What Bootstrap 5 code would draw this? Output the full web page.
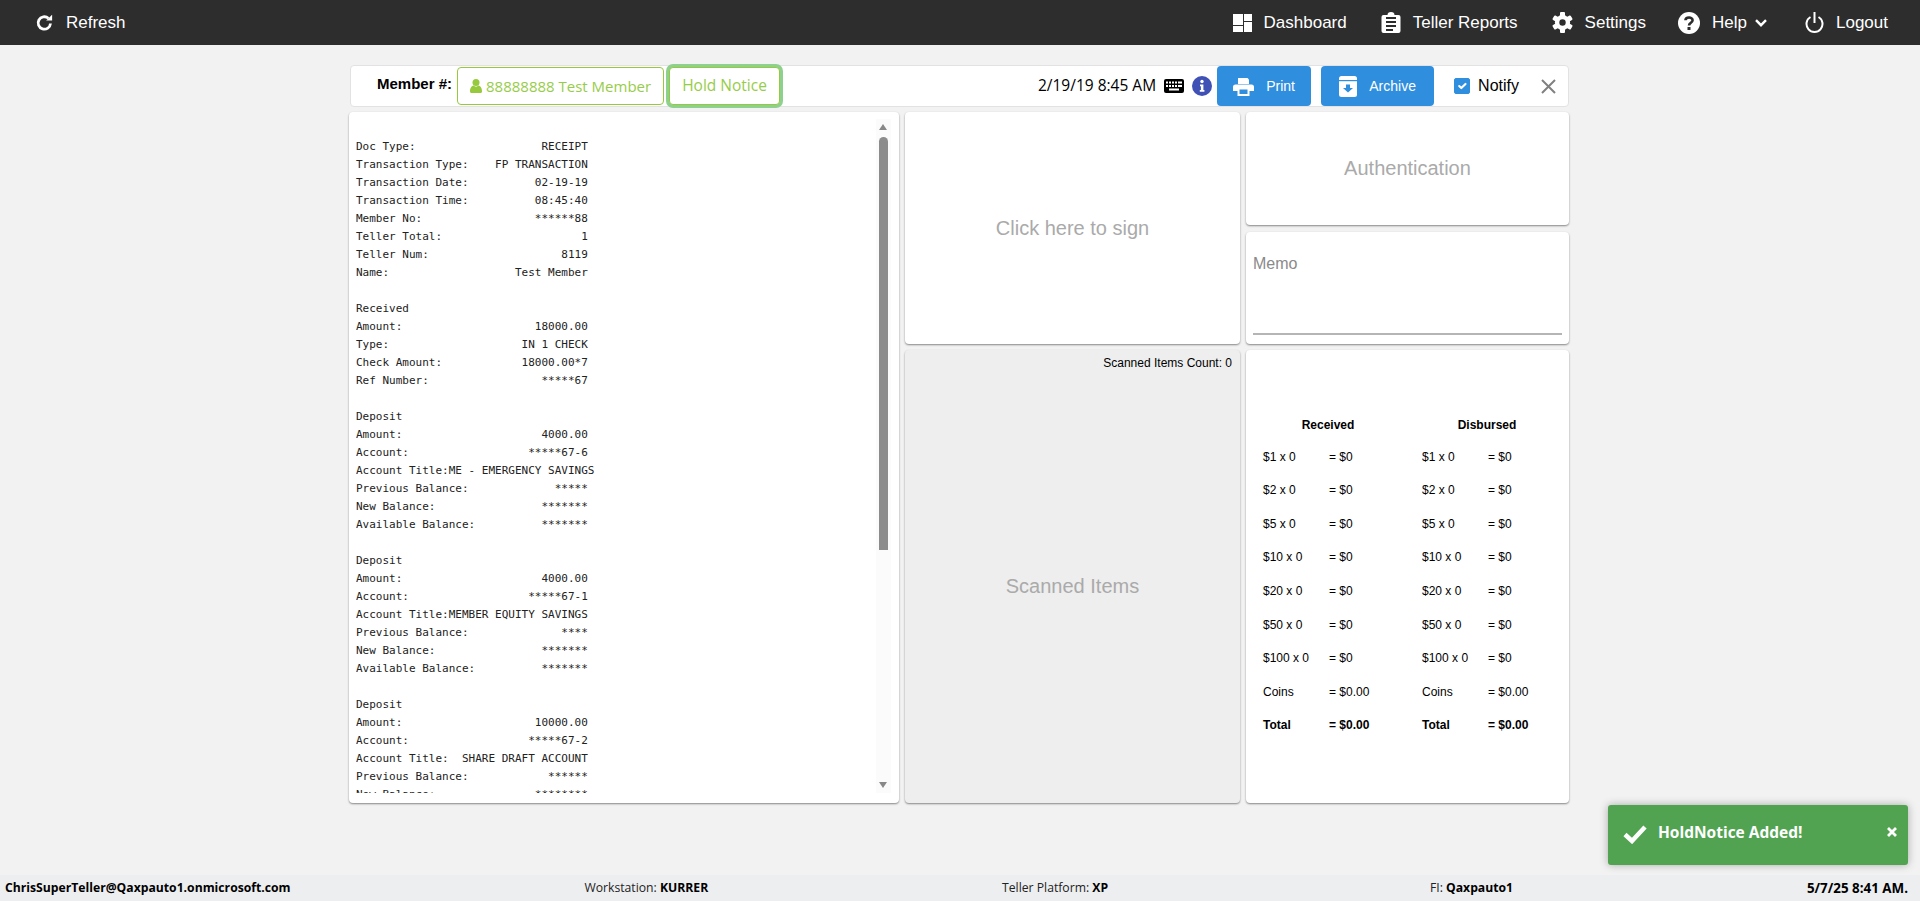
<!DOCTYPE html>
<html lang="en">
<head>
  <meta charset="UTF-8">
  <title>Teller</title>
  <link href="https://cdn.jsdelivr.net/npm/bootstrap@5.3.0/dist/css/bootstrap.min.css" rel="stylesheet">
  <style>
    body {
      background-color: #f2f2f2;
      font-family: "Liberation Sans", Arial, sans-serif;
      min-height: 901px;
      height: 901px;
      overflow: hidden;
      position: relative;
    }
    .top-bar {
      background-color: #2d2d2d;
      height: 45px;
      padding: 0 32px 0 35px;
      font-size: 17px;
    }
    .top-link {
      color: #fff;
      text-decoration: none;
      gap: 12px;
    }
    .link-reports { margin-left: 34px; }
    .link-settings { margin-left: 34px; }
    .link-help { margin-left: 32px; }
    .link-logout { margin-left: 38px; }
    .page-wrap {
      width: 1220px;
      margin: 20px 0 0 349px;
    }
    .tool-strip {
      height: 42px;
      margin-left: 1px;
      margin-bottom: 5px;
      background: #fff;
      border: 1px solid #e2e2e2;
      border-radius: 4px;
      padding-right: 12px;
      font-family: "Open Sans", sans-serif;
    }
    .member-label {
      font-family: "Liberation Sans", Arial, sans-serif;
      font-weight: 700;
      font-size: 15px;
      margin-left: 26px;
      margin-right: 5px;
      margin-top: -3px;
      color: #000;
    }
    .green-box {
      height: 38px;
      border: 1px solid #97c93d;
      border-radius: 4px;
      color: #97cc4a;
      font-size: 15px;
      background: #fff;
      gap: 4px;
    }
    .box-member { width: 207px; padding-left: 12px; }
    .box-hold {
      width: 111px;
      margin-left: 5px;
      justify-content: center;
      box-shadow: 0 0 0 3px #8ed18e;
      font-size: 15.5px;
    }
    .stamp-text {
      font-size: 15.5px;
      color: #000;
      margin-left: auto;
      margin-right: 8px;
    }
    .info-dot { margin: 0 5px 0 8px; }
    .blue-btn {
      background: #2f8edd;
      color: #fff;
      border: 0;
      border-radius: 4px;
      height: 40px;
      font-size: 14px;
      gap: 12px;
      font-family: "Liberation Sans", Arial, sans-serif;
    }
    .btn-print { width: 94px; }
    .btn-archive { width: 113px; margin-left: 10px; }
    .notify-check.form-check-input {
      width: 16px;
      height: 16px;
      margin: 0 8px 0 20px;
      background-color: #2f8edd;
      border-color: #2f8edd;
      border-radius: 2px;
    }
    .notify-text {
      font-size: 16px;
      color: #000;
      font-family: "Liberation Sans", Arial, sans-serif;
    }
    .close-x { margin-left: 22px; }
    .panel-grid {
      display: grid;
      grid-template-columns: 550px 335px 323px;
      grid-template-rows: 113px 113px 453px;
      gap: 6px;
      height: 691px;
    }
    .sheet {
      background: #fff;
      border-radius: 4px;
      box-shadow: 0 1px 2px rgba(0, 0, 0, .45);
    }
    .sheet-receipt {
      grid-row: 1 / 4;
      position: relative;
      overflow: hidden;
    }
    .receipt-text {
      font-family: "DejaVu Sans Mono", monospace;
      font-size: 11px;
      line-height: 18px;
      color: #222;
      margin: 0;
      padding: 26px 0 0 7px;
      height: 681px;
      overflow: hidden;
    }
    .scroll-track {
      position: absolute;
      top: 7px;
      left: 527px;
      width: 15px;
      height: 674px;
      background: #fbfbfb;
    }
    .scroll-up, .scroll-down {
      position: absolute;
      left: 3px;
      width: 0;
      height: 0;
      border-left: 4.5px solid transparent;
      border-right: 4.5px solid transparent;
    }
    .scroll-up { top: 5px; border-bottom: 6px solid #888; }
    .scroll-down { bottom: 5px; border-top: 6px solid #888; }
    .scroll-thumb {
      position: absolute;
      left: 3px;
      top: 18px;
      width: 9px;
      height: 413px;
      background: #8c8c8c;
      border-radius: 5px 5px 0 0;
    }
    .sheet-sign { grid-row: 1 / 3; }
    .ghost-text { color: #aaa; font-size: 20px; }
    .sheet-auth { padding-bottom: 2px; }
    .sheet-memo {
      margin-top: 1px;
      padding: 23px 7px 9px;
      color: #8a8a8a;
      font-size: 16px;
      line-height: 18px;
    }
    .memo-line { border-bottom: 2px solid #b5b5b5; }
    .sheet-scan {
      background: #eeeeee;
      font-size: 12px;
    }
    .scan-count { padding: 4px 8px 0 0; color: #000; }
    .scan-body { padding-bottom: 4px; }
    .cash-table {
      width: 100%;
      font-size: 12px;
      color: #000;
      table-layout: fixed;
    }
    .cash-table th { height: 29px; text-align: center; }
    .cash-table .head-in { padding: 0 29px 0 0; }
    .cash-table .head-out { padding: 0 17px 0 0; }
    .cash-table td { height: 33.6px; padding: 0; }
    .cash-table .col-a { width: 66px; }
    .cash-table .col-b { width: 93px; }
    .cash-wrap { padding-left: 17px; }
    .toast-msg {
      position: absolute;
      left: 1608px;
      top: 805px;
      width: 300px;
      height: 60px;
      background: #51a351;
      color: #fff;
      border-radius: 3px;
      box-shadow: 0 0 8px rgba(0, 0, 0, .3);
      padding-left: 15px;
      font-family: "Open Sans", sans-serif;
      font-weight: 700;
      font-size: 15.5px;
    }
    .toast-msg .toast-check { margin-top: -3px; }
    .toast-msg .toast-label { margin: -5px 0 0 11px; }
    .toast-msg .toast-x { margin: -6px 11px 0 auto; }
    .foot-bar {
      position: absolute;
      left: 0;
      right: 0;
      bottom: 0;
      height: 26px;
      background: #edeef0;
      padding: 0 12px 0 5px;
      font-family: "Open Sans", sans-serif;
      font-size: 12.2px;
      color: #222;
    }
    .foot-bar b { color: #000; }
    .foot-gap { margin-right: 28px; }
    .foot-date { font-size: 13.4px; }
  </style>
</head>
<body>
  <nav class="top-bar d-flex align-items-center">
    <a href="#" class="top-link d-flex align-items-center">
      <svg width="19" height="18" viewBox="0 0 18 18"><path d="M15 9.5A6.2 6.2 0 1 1 12.9 4.3" fill="none" stroke="#fff" stroke-width="2.8"/><path d="M10.6 6.6H16.6V.8z" fill="#fff"/></svg>
      Refresh
    </a>
    <a href="#" class="top-link d-flex align-items-center ms-auto">
      <svg width="19" height="18" viewBox="0 0 19 18" fill="#fff"><rect width="10" height="11"/><rect y="12" width="10" height="6"/><rect x="11" width="8" height="7"/><rect x="11" y="8" width="8" height="10"/></svg>
      Dashboard
    </a>
    <a href="#" class="top-link link-reports d-flex align-items-center">
      <svg width="20" height="21" viewBox="0 0 20 21"><path d="M2.5 3H6.5A3.5 3 0 0 1 13.5 3H17.5A2 2 0 0 1 19.5 5V19A2 2 0 0 1 17.5 21H2.5A2 2 0 0 1 .5 19V5A2 2 0 0 1 2.5 3z" fill="#fff"/><g fill="#2d2d2d"><rect x="5" y="5" width="10" height="2"/><rect x="5" y="9" width="10" height="2"/><rect x="5" y="13" width="10" height="2"/><rect x="5" y="17" width="7" height="2"/></g></svg>
      Teller Reports
    </a>
    <a href="#" class="top-link link-settings d-flex align-items-center">
      <svg width="21" height="21" viewBox="0 0 21 21"><g fill="#fff"><rect x="8" y="0" width="5" height="21" rx="1"/><rect x="8" y="0" width="5" height="21" rx="1" transform="rotate(60 10.5 10.5)"/><rect x="8" y="0" width="5" height="21" rx="1" transform="rotate(120 10.5 10.5)"/></g><circle cx="10.5" cy="10.5" r="7.6" fill="#fff"/><circle cx="10.5" cy="10.5" r="3.2" fill="#2d2d2d"/></svg>
      Settings
    </a>
    <a href="#" class="top-link link-help d-flex align-items-center">
      <svg width="22" height="22" viewBox="0 0 22 22"><circle cx="11" cy="11" r="11" fill="#fff"/><path d="M7.4 8.3C7.6 4.7 14.6 4.6 14.6 8.3 14.6 10.8 11 10.8 11 13.6" fill="none" stroke="#2d2d2d" stroke-width="2.6"/><rect x="9.5" y="15" width="3" height="3" fill="#2d2d2d"/></svg>
      <span class="d-flex align-items-center gap-2">Help
        <svg width="12" height="8" viewBox="0 0 12 8"><path d="M1 1.2L6 6.2 11 1.2" fill="none" stroke="#fff" stroke-width="2.4"/></svg>
      </span>
    </a>
    <a href="#" class="top-link link-logout d-flex align-items-center">
      <svg width="19" height="21" viewBox="0 0 19 21"><path d="M5.5 5A8 8 0 1 0 13.5 5" fill="none" stroke="#fff" stroke-width="2"/><rect x="8.5" y="0" width="2" height="11" fill="#fff"/></svg>
      Logout
    </a>
  </nav>

  <div class="page-wrap">
    <div class="tool-strip d-flex align-items-center">
      <span class="member-label">Member #:</span>
      <div class="green-box box-member d-flex align-items-center">
        <svg width="12" height="14" viewBox="0 0 12 14" fill="#97c93d"><circle cx="6" cy="3.5" r="3.5"/><path d="M0 12.5C0 8.5 2 7 3.5 6.6 5 8 7 8 8.5 6.6 10 7 12 8.5 12 12.5 12 14 11 14 10 14H2C1 14 0 14 0 12.5z"/></svg>
        88888888 Test Member
      </div>
      <div class="green-box box-hold d-flex align-items-center">Hold Notice</div>
      <span class="stamp-text">2/19/19 8:45 AM</span>
      <svg width="20" height="14" viewBox="0 0 20 14"><rect width="20" height="14" rx="2" fill="#000"/><g fill="#fff"><rect x="2" y="2.5" width="2" height="2"/><rect x="5" y="2.5" width="2" height="2"/><rect x="8" y="2.5" width="2" height="2"/><rect x="11" y="2.5" width="2" height="2"/><rect x="14" y="2.5" width="4" height="2"/><rect x="2" y="6" width="2" height="2"/><rect x="5" y="6" width="2" height="2"/><rect x="8" y="6" width="2" height="2"/><rect x="11" y="6" width="2" height="2"/><rect x="14" y="6" width="4" height="2"/><rect x="5" y="9.5" width="10" height="2"/></g></svg>
      <svg class="info-dot" width="20" height="20" viewBox="0 0 20 20"><circle cx="10" cy="10" r="10" fill="#3f51b5"/><circle cx="10" cy="5.5" r="1.7" fill="#fff"/><path d="M8 8.5H11.4V14H12.4V15.8H7.8V14H8.9V10.2H8z" fill="#fff"/></svg>
      <button class="blue-btn btn-print d-flex align-items-center justify-content-center">
        <svg width="21" height="19" viewBox="0 0 21 19"><path d="M5 1H14.5L16 2.5V7H5z" fill="#fff"/><path d="M2.5 7.5H18.5A2.5 2.5 0 0 1 21 10V14H16.5V19H4.5V14H0V10A2.5 2.5 0 0 1 2.5 7.5z" fill="#fff"/><rect x="6.5" y="12.5" width="8" height="4.5" fill="#2f8edd"/></svg>
        Print
      </button>
      <button class="blue-btn btn-archive d-flex align-items-center justify-content-center">
        <svg width="18" height="21" viewBox="0 0 18 21"><rect width="18" height="21" rx="2.5" fill="#fff"/><rect y="4" width="18" height="1.2" fill="#2f8edd"/><path d="M7 8.5H11V12H14L9 16.5 4 12H7z" fill="#2f8edd"/></svg>
        Archive
      </button>
      <input class="form-check-input notify-check mt-0" type="checkbox" checked aria-label="Notify">
      <span class="notify-text">Notify</span>
      <svg class="close-x" width="15" height="15" viewBox="0 0 15 15"><path d="M1 1L14 14M14 1L1 14" stroke="#808080" stroke-width="2"/></svg>
    </div>

    <div class="panel-grid">
      <div class="sheet sheet-receipt">
<pre class="receipt-text">Doc Type:                   RECEIPT
Transaction Type:    FP TRANSACTION
Transaction Date:          02-19-19
Transaction Time:          08:45:40
Member No:                 ******88
Teller Total:                     1
Teller Num:                    8119
Name:                   Test Member

Received
Amount:                    18000.00
Type:                    IN 1 CHECK
Check Amount:            18000.00*7
Ref Number:                 *****67

Deposit
Amount:                     4000.00
Account:                  *****67-6
Account Title:ME - EMERGENCY SAVINGS
Previous Balance:             *****
New Balance:                *******
Available Balance:          *******

Deposit
Amount:                     4000.00
Account:                  *****67-1
Account Title:MEMBER EQUITY SAVINGS
Previous Balance:              ****
New Balance:                *******
Available Balance:          *******

Deposit
Amount:                    10000.00
Account:                  *****67-2
Account Title:  SHARE DRAFT ACCOUNT
Previous Balance:            ******
New Balance:               ********</pre>
        <div class="scroll-track">
          <span class="scroll-up"></span>
          <span class="scroll-thumb"></span>
          <span class="scroll-down"></span>
        </div>
      </div>
      <div class="sheet sheet-sign d-flex align-items-center justify-content-center ghost-text">Click here to sign</div>
      <div class="sheet sheet-auth d-flex align-items-center justify-content-center ghost-text">Authentication</div>
      <div class="sheet sheet-memo d-flex flex-column justify-content-between">
        <span>Memo</span>
        <div class="memo-line"></div>
      </div>
      <div class="sheet sheet-scan d-flex flex-column">
        <div class="scan-count text-end">Scanned Items Count: 0</div>
        <div class="scan-body flex-grow-1 d-flex align-items-center justify-content-center ghost-text">Scanned Items</div>
      </div>
      <div class="sheet cash-wrap d-flex align-items-center">
        <table class="cash-table">
          <colgroup><col class="col-a"><col class="col-b"><col class="col-a"><col></colgroup>
          <thead>
            <tr><th colspan="2" class="head-in">Received</th><th colspan="2" class="head-out">Disbursed</th></tr>
          </thead>
          <tbody>
            <tr><td>$1 x 0</td><td>= $0</td><td>$1 x 0</td><td>= $0</td></tr>
            <tr><td>$2 x 0</td><td>= $0</td><td>$2 x 0</td><td>= $0</td></tr>
            <tr><td>$5 x 0</td><td>= $0</td><td>$5 x 0</td><td>= $0</td></tr>
            <tr><td>$10 x 0</td><td>= $0</td><td>$10 x 0</td><td>= $0</td></tr>
            <tr><td>$20 x 0</td><td>= $0</td><td>$20 x 0</td><td>= $0</td></tr>
            <tr><td>$50 x 0</td><td>= $0</td><td>$50 x 0</td><td>= $0</td></tr>
            <tr><td>$100 x 0</td><td>= $0</td><td>$100 x 0</td><td>= $0</td></tr>
            <tr><td>Coins</td><td>= $0.00</td><td>Coins</td><td>= $0.00</td></tr>
            <tr class="fw-bold"><td>Total</td><td>= $0.00</td><td>Total</td><td>= $0.00</td></tr>
          </tbody>
        </table>
      </div>
    </div>
  </div>

  <div class="toast-msg d-flex align-items-center">
    <svg class="toast-check" width="24" height="20" viewBox="0 0 24 20"><path d="M2 10.5L9 17 22 3" fill="none" stroke="#fff" stroke-width="4.5"/></svg>
    <span class="toast-label">HoldNotice Added!</span>
    <svg class="toast-x" width="10" height="10" viewBox="0 0 10 10"><path d="M1 1L9 9M9 1L1 9" stroke="#fff" stroke-width="2.8"/></svg>
  </div>

  <footer class="foot-bar d-flex align-items-center justify-content-between">
    <b>ChrisSuperTeller@Qaxpauto1.onmicrosoft.com</b>
    <span>Workstation: <b>KURRER</b></span>
    <span class="foot-gap">Teller Platform: <b>XP</b></span>
    <span>FI: <b>Qaxpauto1</b></span>
    <b class="foot-date">5/7/25 8:41 AM.</b>
  </footer>
  <script src="https://cdn.jsdelivr.net/npm/bootstrap@5.3.0/dist/js/bootstrap.bundle.min.js"></script>
</body>
</html>
